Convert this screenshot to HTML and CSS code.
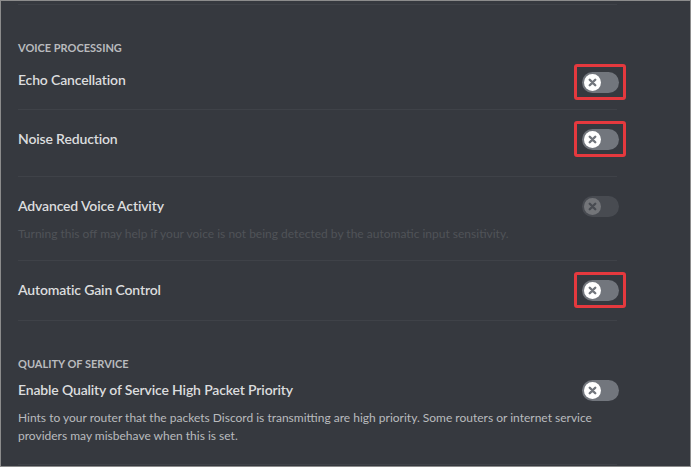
FILE: index.html
```html
<!DOCTYPE html>
<html>
<head>
<meta charset="utf-8">
<link rel="stylesheet" href="styles.css">
</head>
<body>
<div class="frame">
  <div class="top-rule"></div>

  <h2 class="section-title title-voice">Voice Processing</h2>

  <div class="row row-echo">
    <div class="row-main">
      <span class="label">Echo Cancellation</span>
      <span class="toggle highlighted"><span class="knob"><svg viewBox="0 0 10 10" class="x"><path d="M2.5 2.5 L7.5 7.5 M7.5 2.5 L2.5 7.5"/></svg></span></span>
    </div>
  </div>

  <div class="row row-noise">
    <div class="row-main">
      <span class="label">Noise Reduction</span>
      <span class="toggle highlighted"><span class="knob"><svg viewBox="0 0 10 10" class="x"><path d="M2.5 2.5 L7.5 7.5 M7.5 2.5 L2.5 7.5"/></svg></span></span>
    </div>
  </div>

  <div class="row row-adv">
    <div class="row-main">
      <span class="label">Advanced Voice Activity</span>
      <span class="toggle disabled"><span class="knob"><svg viewBox="0 0 10 10" class="x"><path d="M2.5 2.5 L7.5 7.5 M7.5 2.5 L2.5 7.5"/></svg></span></span>
    </div>
    <p class="note note-disabled">Turning this off may help if your voice is not being detected by the automatic input sensitivity.</p>
  </div>

  <div class="row row-gain">
    <div class="row-main">
      <span class="label">Automatic Gain Control</span>
      <span class="toggle highlighted"><span class="knob"><svg viewBox="0 0 10 10" class="x"><path d="M2.5 2.5 L7.5 7.5 M7.5 2.5 L2.5 7.5"/></svg></span></span>
    </div>
  </div>

  <h2 class="section-title title-qos">Quality of Service</h2>

  <div class="row row-qos">
    <div class="row-main">
      <span class="label">Enable Quality of Service High Packet Priority</span>
      <span class="toggle"><span class="knob"><svg viewBox="0 0 10 10" class="x"><path d="M2.5 2.5 L7.5 7.5 M7.5 2.5 L2.5 7.5"/></svg></span></span>
    </div>
    <p class="note">Hints to your router that the packets Discord is transmitting are high priority. Some routers or internet service providers may misbehave when this is set.</p>
  </div>
</div>
</body>
</html>
```

FILE: styles.css
```css
* { box-sizing: border-box; }

html, body {
  margin: 0;
  padding: 0;
  background: #36393f;
}

.frame {
  width: 691px;
  height: 467px;
  border: 1px solid #8c8c8c;
  background: #36393f;
  padding: 0 71px 0 17px;
  font-family: Lato, "Noto Sans", sans-serif;
  overflow: hidden;
}

.top-rule {
  height: 4px;
  margin-right: 2px;
  border-bottom: 1px solid #3f4248;
}

.section-title {
  margin: 0;
  font-size: 11px;
  line-height: 16px;
  font-weight: 700;
  text-transform: uppercase;
  color: #b9bbbe;
  letter-spacing: 0;
}

.title-voice { margin-top: 35px; }
.title-qos { margin-top: 35px; }

.row {
  border-bottom: 1px solid #3f4248;
  margin-right: 2px;
}

.row-main {
  display: flex;
  align-items: center;
  justify-content: space-between;
  height: 24px;
  margin-right: -2px;
}

.label {
  font-size: 14px;
  font-weight: 600;
  letter-spacing: -0.15px;
  color: #dcddde;
  line-height: 20px;
  position: relative;
}

.row-echo .label { top: -2px; }

.row-echo { padding: 14px 0 15px; }
.row-noise { padding: 17px 0 25px; }
.row-adv { padding: 17px 0 17px; }
.row-gain { padding: 17px 0 18px; }
.row-qos { padding: 6px 0 19px; }

.note {
  margin: 7px 0 0;
  font-size: 12px;
  line-height: 18px;
  color: #b9bbbe;
}

.note-disabled {
  color: #505358;
}

.toggle {
  position: relative;
  width: 37px;
  height: 21px;
  border-radius: 11px;
  background: #72767d;
  flex: none;
}

.toggle.disabled { opacity: 0.3; }

.toggle.highlighted::after {
  content: "";
  position: absolute;
  left: -8px;
  right: -7px;
  top: -8px;
  bottom: -7px;
  border: 3px solid #e5393e;
  border-radius: 3px;
}

.knob {
  position: absolute;
  left: 2px;
  top: 2px;
  width: 17px;
  height: 17px;
  border-radius: 50%;
  background: #ffffff;
  display: flex;
  align-items: center;
  justify-content: center;
}

.x {
  width: 11px;
  height: 11px;
}

.x path {
  stroke: #72767d;
  stroke-width: 2.2;
  stroke-linecap: round;
  fill: none;
}
```
